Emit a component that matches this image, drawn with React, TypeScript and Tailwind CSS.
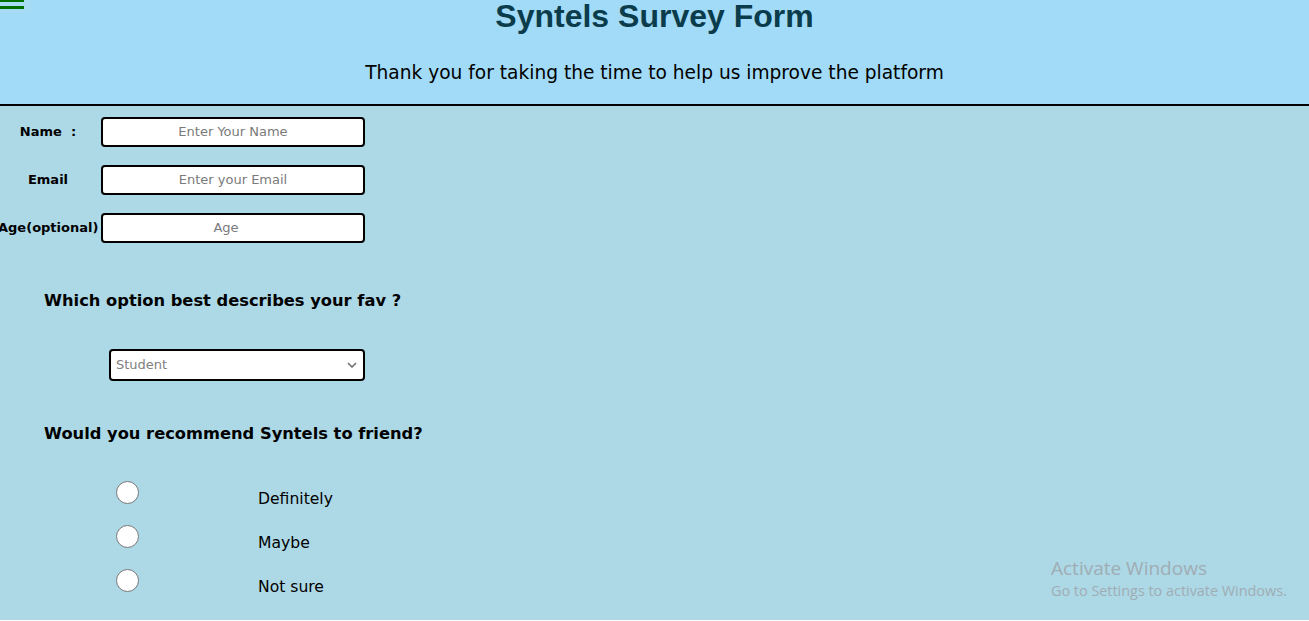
export default function App() {
  const comic = "font-['Comic_Sans_MS','DejaVu_Sans',sans-serif]";
  return (
    <div className={`min-h-[621px] w-full bg-[#add8e6] ${comic} text-black relative`}>
      {/* header */}
      <header className="relative h-[107px] bg-[#a2dbf7] border-b-2 border-black">
        <div className="absolute left-0 top-0 w-[31px] h-[14px] bg-[#a8dcf5]">
          <div className="w-[24px] h-[3px] bg-[#007000]" />
          <div className="w-[24px] h-[3px] mt-[4px] bg-[#007000]" />
        </div>
        <h1 className="text-center font-['Liberation_Sans',Arial,sans-serif] font-bold text-[32px] leading-[34px] text-[#0b3c4c] -mt-[1px]">
          Syntels Survey Form
        </h1>
        <p className="text-center text-[18.6px] leading-[24px] mt-[28px]">
          Thank you for taking the time to help us improve the platform
        </p>
      </header>

      {/* basic fields */}
      <div className="flex flex-col gap-[18px] pt-[11px]">
        <Field label="Name  :" placeholder="Enter Your Name" />
        <Field label="Email" placeholder="Enter your Email" />
        <Field label="Age(optional)" placeholder="Age" shift />
      </div>

      <h2 className="pl-[44px] mt-[46px] text-[16.3px] font-bold leading-[24px]">
        Which option best describes your fav ?
      </h2>
      <div className="pl-[109px] mt-[36px]">
        <div className="w-[256px] h-[32px] bg-white border-2 border-black rounded-[4px] flex items-center justify-between px-[5px] text-[13px] text-[#808080]">
          <span>Student</span>
          <svg width="10" height="6" viewBox="0 0 10 6" className="mr-[1px]">
            <path d="M1 1l4 4 4-4" fill="none" stroke="#6b6b6b" strokeWidth="1.5" />
          </svg>
        </div>
      </div>

      <h2 className="pl-[44px] mt-[41px] text-[16.3px] font-bold leading-[24px]">
        Would you recommend Syntels to friend?
      </h2>
      <div className="mt-[35px] flex flex-col gap-[21px]">
        {["Definitely", "Maybe", "Not sure"].map((t) => (
          <div key={t} className="flex items-start h-[23px]">
            <div className="ml-[116px] w-[23px] h-[23px] rounded-full bg-white border border-[#767676]" />
            <span className="ml-[119px] mt-[9px] text-[15.6px] leading-[18px]">{t}</span>
          </div>
        ))}
      </div>

      {/* windows watermark */}
      <div className="absolute left-[1051px] top-[557px] font-['Open_Sans',sans-serif] text-[#9fadb4]">
        <div className="text-[19px] leading-[24px]">Activate Windows</div>
        <div className="text-[14.4px] leading-[22px]">Go to Settings to activate Windows.</div>
      </div>
    </div>
  );
}

function Field({ label, placeholder, shift }: { label: string; placeholder: string; shift?: boolean }) {
  return (
    <div className="flex items-center">
      <label className="w-[100px] shrink-0 text-center text-[13px] font-bold whitespace-pre -ml-[2px] mr-[3px]">
        {label}
      </label>
      <div
        className={`w-[264px] h-[30px] bg-white border-2 border-black rounded-[4px] flex items-center justify-center text-[13px] text-[#7a7a7a] ${
          shift ? "pr-[14px]" : ""
        }`}
      >
        <span>{placeholder}</span>
      </div>
    </div>
  );
}
